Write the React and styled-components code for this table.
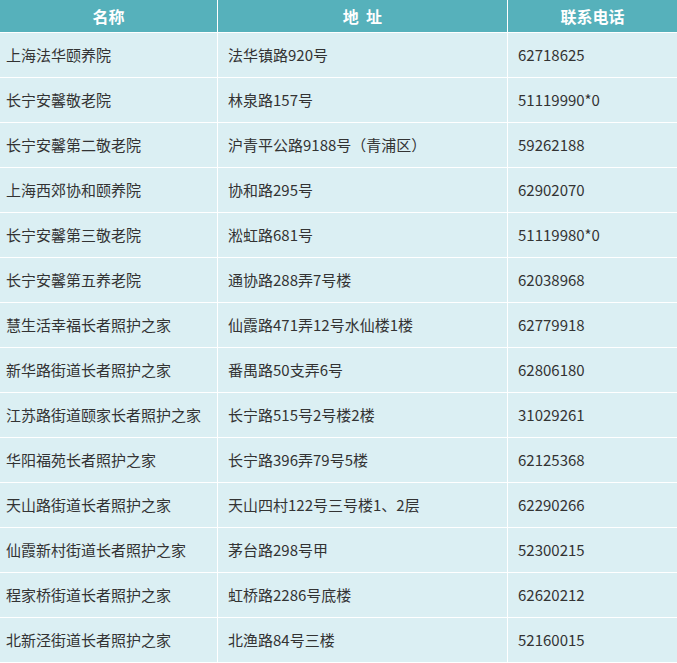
import React from "react";
import styled, { createGlobalStyle } from "styled-components";

const GlobalStyle = createGlobalStyle`
  body {
    margin: 0;
    background: #ffffff;
    font-family: "Noto Sans CJK SC", "Noto Sans", sans-serif;
  }
`;

const rows = [
  ["上海法华颐养院", "法华镇路920号", "62718625"],
  ["长宁安馨敬老院", "林泉路157号", "51119990*0"],
  ["长宁安馨第二敬老院", "沪青平公路9188号（青浦区）", "59262188"],
  ["上海西郊协和颐养院", "协和路295号", "62902070"],
  ["长宁安馨第三敬老院", "淞虹路681号", "51119980*0"],
  ["长宁安馨第五养老院", "通协路288弄7号楼", "62038968"],
  ["慧生活幸福长者照护之家", "仙霞路471弄12号水仙楼1楼", "62779918"],
  ["新华路街道长者照护之家", "番禺路50支弄6号", "62806180"],
  ["江苏路街道颐家长者照护之家", "长宁路515号2号楼2楼", "31029261"],
  ["华阳福苑长者照护之家", "长宁路396弄79号5楼", "62125368"],
  ["天山路街道长者照护之家", "天山四村122号三号楼1、2层", "62290266"],
  ["仙霞新村街道长者照护之家", "茅台路298号甲", "52300215"],
  ["程家桥街道长者照护之家", "虹桥路2286号底楼", "62620212"],
  ["北新泾街道长者照护之家", "北渔路84号三楼", "52160015"],
];

function App() {
  return (
    <>
      <GlobalStyle />
      <Table>
        <HeadRow>
          <HeadCell>名称</HeadCell>
          <HeadCell>地&nbsp;&nbsp;址</HeadCell>
          <HeadCell>联系电话</HeadCell>
        </HeadRow>
        {rows.map((r, i) => (
          <BodyRow key={i}>
            <Cell first>{r[0]}</Cell>
            <Cell>{r[1]}</Cell>
            <Cell>{r[2]}</Cell>
          </BodyRow>
        ))}
      </Table>
    </>
  );
}

export default App;

const Table = styled.div`
  width: 677px;
  display: flex;
  flex-direction: column;
  gap: 1px;
  background: #ffffff;
  padding-bottom: 1px;
`;

const HeadRow = styled.div`
  display: grid;
  grid-template-columns: 217px 289px 1fr;
  column-gap: 1px;
  height: 32px;
`;

const HeadCell = styled.div`
  background: #56b1bb;
  color: #ffffff;
  font-weight: bold;
  font-size: 16px;
  display: flex;
  align-items: center;
  justify-content: center;
  padding-bottom: 1px;
`;

const BodyRow = styled.div`
  display: grid;
  grid-template-columns: 217px 289px 1fr;
  column-gap: 1px;
  height: 44px;
`;

const Cell = styled.div`
  background: #dbeff3;
  color: #333333;
  font-size: 15px;
  display: flex;
  align-items: center;
  padding-left: ${(p) => (p.first ? "6px" : "10px")};
  padding-bottom: 2px;
  white-space: nowrap;
`;
